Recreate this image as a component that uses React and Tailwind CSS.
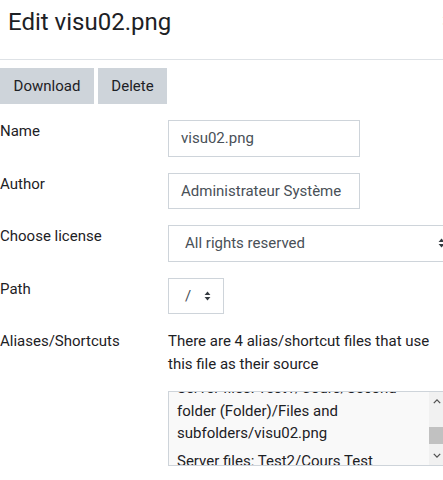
function UpDown({ className = '' }) {
  return (
    <svg viewBox="0 0 8 12" className={className} fill="currentColor" aria-hidden="true">
      <path d="M4 0.5 L7.5 4.8 H0.5 Z" />
      <path d="M4 11.5 L0.5 7.2 H7.5 Z" />
    </svg>
  )
}

function Chevron({ up = false }) {
  return (
    <svg viewBox="0 0 10 6" className="w-[8px] h-[5px]" fill="none" stroke="currentColor" strokeWidth="1.6">
      {up ? <path d="M1 5 L5 1 L9 5" /> : <path d="M1 1 L5 5 L9 1" />}
    </svg>
  )
}

function Row({ label, children, className = 'mb-4' }) {
  return (
    <div className={`flex ${className}`}>
      <div className="w-[168px] shrink-0 leading-[22.5px]">{label}</div>
      <div className="flex-1 min-w-0">{children}</div>
    </div>
  )
}

export default function App() {
  return (
    <div
      className="w-[443px] h-[480px] overflow-hidden bg-white text-[15px] text-[#1d2125]"
      style={{ fontFamily: 'Roboto, "Noto Sans", sans-serif' }}
    >
      <div className="w-[470px]">
        <div className="h-[60px] border-b border-[#dee2e6] flex items-start justify-between pl-2 pr-[16px] pt-[8px]">
          <h5 className="text-[24px] leading-[29px] font-normal text-[#1d2125]">Edit visu02.png</h5>
          <span className="text-[22px] leading-[22px] text-[#6a737b] mt-[2px] font-bold">×</span>
        </div>

        <div className="pt-2">
          <div className="flex gap-1 mb-4">
            <button className="bg-[#ced4da] text-[#1d2125] w-[94px] h-9 leading-[22.5px] text-center">Download</button>
            <button className="bg-[#ced4da] text-[#1d2125] w-[69px] h-9 leading-[22.5px] text-center">Delete</button>
          </div>

          <Row label="Name">
            <div className="w-[192px] h-[36.5px] border border-[#ced4da] px-3 py-[6px] leading-[22.5px] text-[#495057]">
              visu02.png
            </div>
          </Row>

          <Row label="Author">
            <div className="w-[192px] h-[36.5px] border border-[#ced4da] px-3 py-[6px] leading-[22.5px] text-[#495057]">
              Administrateur Système
            </div>
          </Row>

          <Row label="Choose license">
            <div className="w-[290px] h-[36.5px] border border-[#ced4da] pl-4 pr-3 py-[6px] leading-[22.5px] text-[#495057] flex items-center justify-between">
              <span>All rights reserved</span>
              <UpDown className="w-[7px] h-[10px] text-[#343a40]" />
            </div>
          </Row>

          <Row label="Path">
            <div className="w-[56px] h-[36.5px] border border-[#ced4da] pl-4 pr-3 py-[6px] leading-[22.5px] text-[#495057] flex items-center justify-between">
              <span>/</span>
              <UpDown className="w-[7px] h-[10px] text-[#343a40]" />
            </div>
          </Row>

          <Row label="Aliases/Shortcuts" className="">
            <div className="leading-[22.5px] mb-4">
              <div>There are 4 alias/shortcut files that use</div>
              <div>this file as their source</div>
            </div>
            <div className="w-[277px] h-[75px] border border-[#ced4da] bg-[#f9f9f9] flex overflow-hidden">
              <div className="flex-1 min-w-0 pl-2 overflow-hidden leading-[22.5px] text-[#1d2125]">
                <div className="-mt-[15px]">
                  <div className="mb-[5.5px]">
                    <div>Server files: Test1/Cours/Second</div>
                    <div>folder (Folder)/Files and</div>
                    <div>subfolders/visu02.png</div>
                  </div>
                  <div>Server files: Test2/Cours Test</div>
                </div>
              </div>
              <div className="w-[15px] shrink-0 bg-[#f1f1f1] flex flex-col items-center text-[#505050]">
                <div className="h-[15px] flex items-center justify-center mt-[2px]">
                  <Chevron up />
                </div>
                <div className="flex-1 w-full pt-[18px]">
                  <div className="h-[17px] w-full bg-[#c1c1c1]" />
                </div>
                <div className="h-[15px] flex items-center justify-center mb-[2px]">
                  <Chevron />
                </div>
              </div>
            </div>
          </Row>
        </div>
      </div>
    </div>
  )
}
